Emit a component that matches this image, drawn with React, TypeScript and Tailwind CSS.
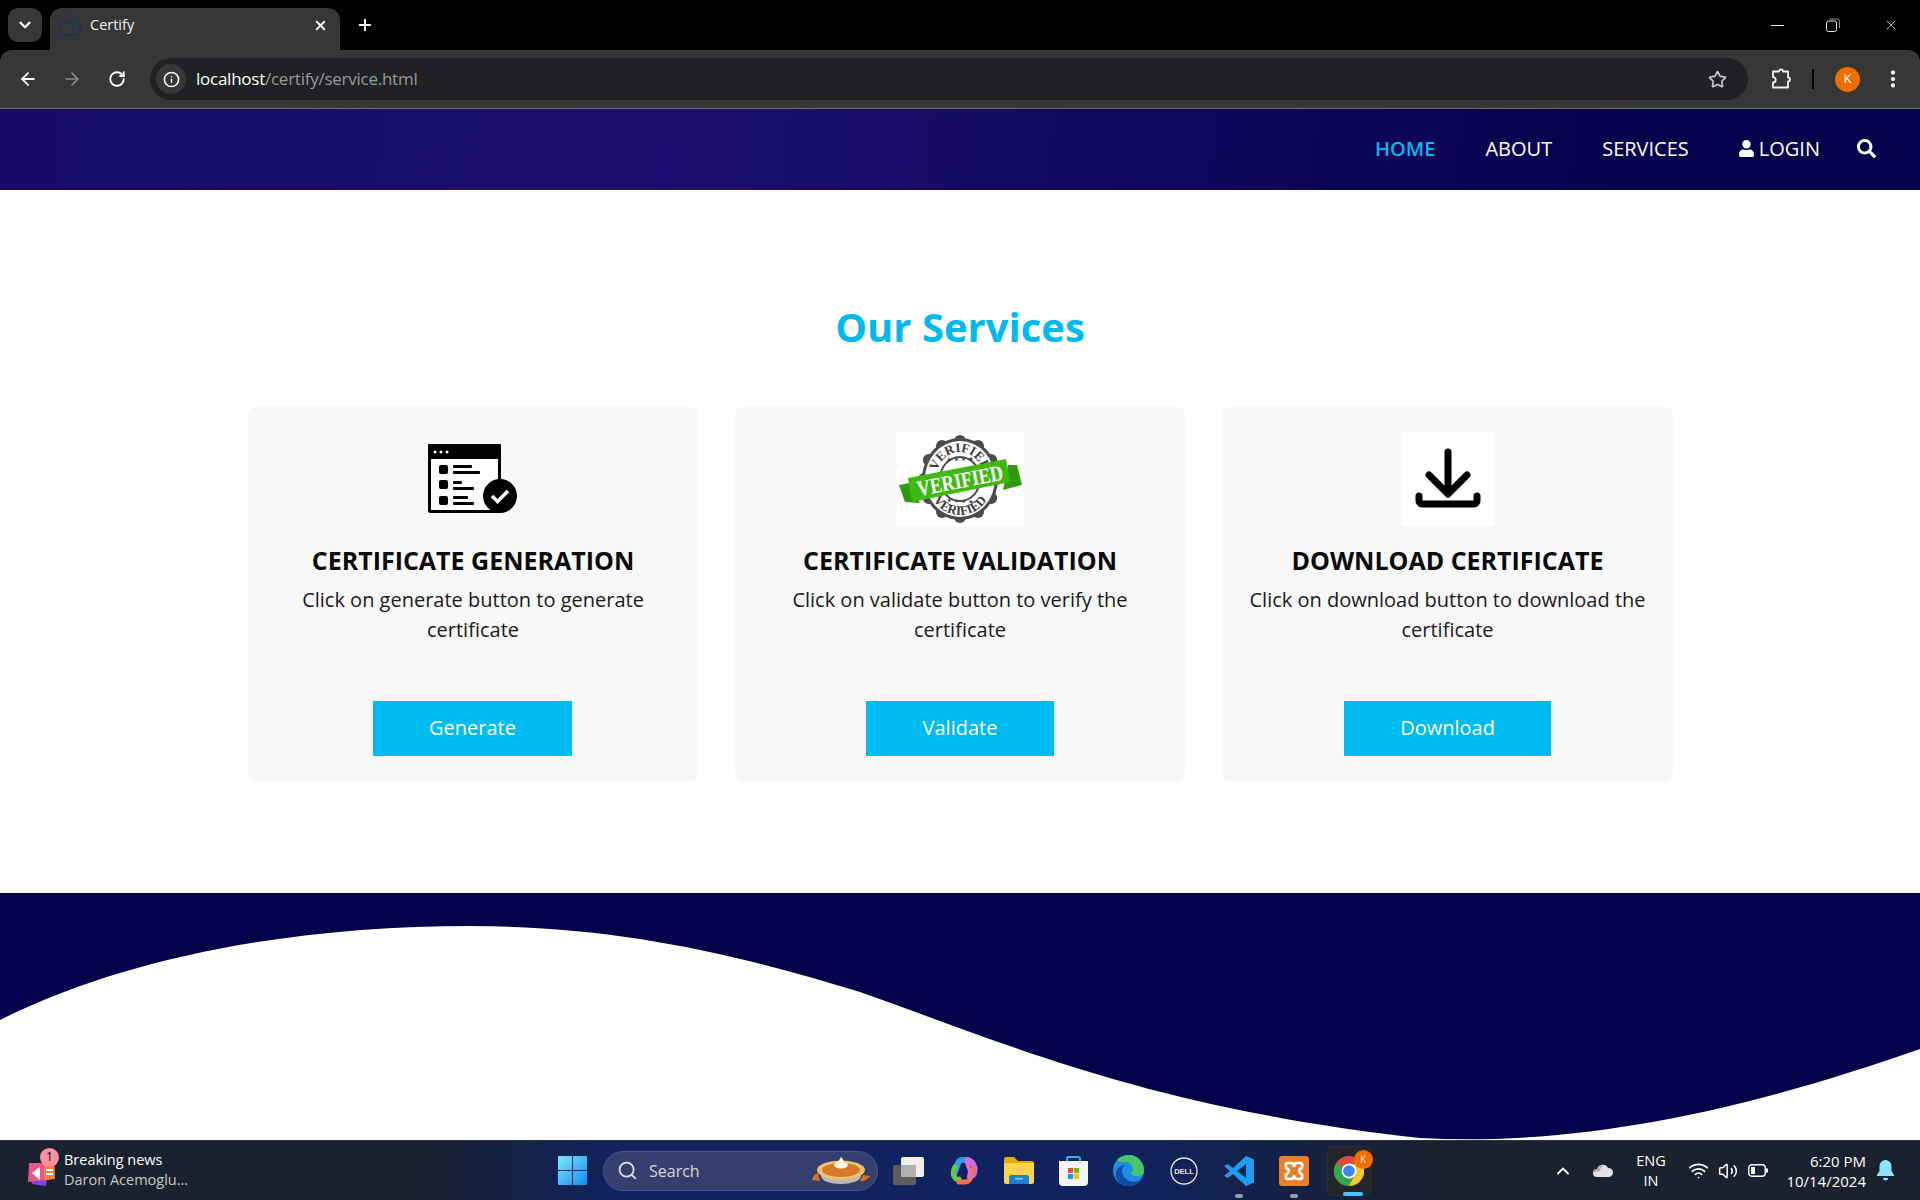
import { ArrowLeft, ArrowRight, ChevronDown, ChevronUp, Info, MoreVertical, Plus, RotateCw, Search, Star, Volume2, Wifi, X } from 'lucide-react';
import { FaSearch, FaUser } from 'react-icons/fa';

const openSans = "font-['Open_Sans',sans-serif]";

function TabFavicon() {
  return (
    <svg width="22" height="22" viewBox="0 0 22 22" fill="none" stroke="#1c3558" strokeWidth="1.3">
      <circle cx="11" cy="5" r="4.2" />
      <rect x="1" y="8" width="20" height="13" rx="1" />
      <rect x="14" y="13" width="7" height="4" />
    </svg>
  );
}

function RestoreIcon() {
  return (
    <svg width="14" height="14" viewBox="0 0 14 14" fill="none" stroke="#e8e8e8" strokeWidth="1">
      <rect x="0.5" y="3" width="10" height="10.5" rx="2" />
      <path d="M3.5 1h7.5a2.5 2.5 0 0 1 2.5 2.5V10" stroke="#999" />
    </svg>
  );
}

function ExtensionIcon() {
  return (
    <svg width="22" height="22" viewBox="0 0 22 22" fill="none" stroke="#f1f1f1" strokeWidth="1.8" strokeLinejoin="round">
      <path d="M2 3.5h6a2 2 0 0 1 4 0h5v6a2 2 0 0 1 0 4v6H2v-5a2.6 2.6 0 0 0 0-5.400z" />
    </svg>
  );
}

function BrowserChrome() {
  return (
    <div className="bg-black">
      <div className="flex h-[50px] items-start">
        <div className="ml-2 mt-2 flex h-[34px] w-[34px] items-center justify-center rounded-[10px] bg-[#373737]">
          <ChevronDown className="h-[18px] w-[18px] text-white" strokeWidth={3} />
        </div>
        <div className="ml-2 mt-2 flex h-[42px] w-[290px] items-center rounded-t-[12px] bg-[#373737] pb-[8px] pl-[9px] pr-3">
          <TabFavicon />
          <span className="ml-[9px] flex-1 font-['Open_Sans',sans-serif] text-[14.5px] text-[#f1f1f1]">Certify</span>
          <X className="h-[15px] w-[15px] text-white" strokeWidth={3} />
        </div>
        <Plus className="ml-[16px] mt-[16px] h-[18px] w-[18px] text-white" strokeWidth={2.6} />
        <div className="ml-auto flex items-center pt-[17px] text-[#e8e8e8]">
          <div className="mr-[42px] h-px w-[13px] bg-[#e8e8e8]" />
          <div className="mr-[43px]"><RestoreIcon /></div>
          <X className="mr-[21px] h-[16px] w-[16px]" strokeWidth={1.2} />
        </div>
      </div>
      <div className="flex h-[58px] items-center rounded-t-[12px] bg-[#373737] pr-[10px]">
        <ArrowLeft className="ml-[18px] h-[20px] w-[20px] text-white" strokeWidth={2.2} />
        <ArrowRight className="ml-[24px] h-[20px] w-[20px] text-[#8a8a8a]" strokeWidth={2} />
        <RotateCw className="ml-[26px] h-[18px] w-[18px] text-white" strokeWidth={2.4} />
        <div className="ml-[24px] flex h-[42px] w-[1598px] items-center rounded-full bg-[#202124] pl-[6px] pr-[21px]">
          <div className="flex h-[30px] w-[30px] items-center justify-center rounded-full bg-[#373737]">
            <Info className="h-[17px] w-[17px] text-white" strokeWidth={2.2} />
          </div>
          <div className="ml-[10px] flex-1 font-['Open_Sans',sans-serif] text-[17px] tracking-[-0.25px]">
            <span className="text-white">localhost</span>
            <span className="text-[#9a9a9a]">/certify/service.html</span>
          </div>
          <Star className="h-[19px] w-[19px] text-[#c4c4c4]" strokeWidth={2.2} />
        </div>
        <div className="ml-[23px]"><ExtensionIcon /></div>
        <div className="ml-[19px] h-[20px] w-[2px] bg-black" />
        <div className="ml-[21px] flex h-[25px] w-[25px] items-center justify-center rounded-full bg-[#f06d00] font-['Open_Sans',sans-serif] text-[13px] text-white">K</div>
        <MoreVertical className="ml-[22px] h-[22px] w-[22px] text-white" strokeWidth={2.6} />
      </div>
    </div>
  );
}

function NavBar() {
  return (
    <nav className={`flex h-[82px] items-center justify-end border-t border-[#6b6b6b] bg-[linear-gradient(95deg,#160a66_0%,#1b0e6e_35%,#0f0558_68%,#05004c_85%,#05004a_100%)] pb-[2px] pr-[36px] text-[20px] text-white ${openSans}`}>
      <a className="mr-[50px] font-semibold text-[#00b9f1]">HOME</a>
      <a className="mr-[50px]">ABOUT</a>
      <a className="mr-[50px]">SERVICES</a>
      <a className="mr-[37px] flex items-center gap-[5px]"><FaUser className="h-[17px] w-[15px]" />LOGIN</a>
      <FaSearch className="mr-[8px] h-[19px] w-[19px]" />
    </nav>
  );
}

function GenerateIcon() {
  return (
    <svg className="mt-px" width="90" height="72" viewBox="0 0 90 72">
      <rect x="1.500" y="1.500" width="70" height="66" rx="1" fill="#fff" stroke="#000" strokeWidth="3" />
      <rect x="0" y="0" width="73" height="15" rx="1" fill="#000" />
      <circle cx="7" cy="8" r="1.500" fill="#fff" /><circle cx="13" cy="8" r="1.500" fill="#fff" /><circle cx="19" cy="8" r="1.500" fill="#fff" />
      <rect x="11" y="21" width="9" height="9" rx="2" /><rect x="25" y="21" width="19" height="3" rx="1" /><rect x="25" y="27" width="27" height="3" rx="1" />
      <rect x="11" y="36" width="9" height="9" rx="2" /><rect x="25" y="37" width="9" height="3" rx="1" /><rect x="25" y="43" width="21" height="3" rx="1" />
      <rect x="11" y="52" width="9" height="9" rx="2" /><rect x="25" y="52" width="15" height="3" rx="1" /><rect x="25" y="58" width="21" height="3" rx="1" />
      <circle cx="72" cy="52" r="17" />
      <path d="M64 52l5.500 5.500L80 47" fill="none" stroke="#fff" strokeWidth="3.500" />
    </svg>
  );
}

function VerifiedIcon() {
  const scallops = Array.from({ length: 12 }, (_, i) => (i * 360) / 12);
  return (
    <div className="bg-white">
      <svg width="128" height="94" viewBox="0 0 128 94">
        <g fill="#4c4c4c">
          {scallops.map((a) => (
            <circle key={a} cx={64 + 36 * Math.cos((a * Math.PI) / 180)} cy={47 + 38 * Math.sin((a * Math.PI) / 180)} r="6" />
          ))}
          <ellipse cx="64" cy="47" rx="38" ry="41" />
        </g>
        <ellipse cx="64" cy="47" rx="35" ry="38" fill="#fff" />
        <ellipse cx="64" cy="47" rx="20" ry="22" fill="none" stroke="#4c4c4c" strokeWidth="2" />
        <defs>
          <path id="arcTop" d="M40 47a24 27 0 0 1 48 0" />
          <path id="arcBottom" d="M31 47a33 36 0 0 0 66 0" />
        </defs>
        <text fontFamily="'Liberation Serif',serif" fontSize="13" fontWeight="700" fill="#3a3a3a" textAnchor="middle">
          <textPath href="#arcTop" startOffset="50%">VERIFIED</textPath>
        </text>
        <text fontFamily="'Liberation Serif',serif" fontSize="13" fontWeight="700" fill="#3a3a3a" textAnchor="middle">
          <textPath href="#arcBottom" startOffset="50%">VERIFIED</textPath>
        </text>
        <text x="64" y="29" fontFamily="'DejaVu Sans',sans-serif" fontSize="6" fill="#444" textAnchor="middle" transform="rotate(-2 64 29)">★ ★ ★ ★</text>
        <text x="64" y="71" fontFamily="'DejaVu Sans',sans-serif" fontSize="6" fill="#444" textAnchor="middle" transform="rotate(4 64 71)">★ ★ ★ ★</text>
        <path d="M112 33h9l5 20-19 5z" fill="#2f9a10" />
        <path d="M3 53l10-2 11 20-15-1z" fill="#2f9a10" />
        <path d="M12 46L110 27l4 23-98 20z" fill="#3fb814" />
        <text x="64" y="56" fontFamily="'Liberation Serif',serif" fontSize="22" fontWeight="700" fill="#fff" textAnchor="middle" textLength="87" lengthAdjust="spacingAndGlyphs" transform="rotate(-11 64 48)">VERIFIED</text>
      </svg>
    </div>
  );
}

function DownloadIcon() {
  return (
    <div className="flex h-[94px] w-[93px] items-center justify-center bg-white">
      <svg width="66" height="62" viewBox="0 0 66 62" fill="none" stroke="#000" strokeWidth="7" strokeLinecap="round" strokeLinejoin="round">
        <path d="M33 4v41" />
        <path d="M14 27l19 19 19-19" />
        <path d="M4 48v5a3 3 0 0 0 3 3h52a3 3 0 0 0 3-3v-5" />
      </svg>
    </div>
  );
}

const services = [
  { title: 'CERTIFICATE GENERATION', text: 'Click on generate button to generate certificate', action: 'Generate', width: 'mr-px w-[199px]', icon: <GenerateIcon /> },
  { title: 'CERTIFICATE VALIDATION', text: 'Click on validate button to verify the certificate', action: 'Validate', width: 'w-[188px]', icon: <VerifiedIcon /> },
  { title: 'DOWNLOAD CERTIFICATE', text: 'Click on download button to download the certificate', action: 'Download', width: 'w-[207px]', icon: <DownloadIcon /> },
];

function Services() {
  return (
    <section className={`h-[703px] bg-white pt-[108px] ${openSans}`}>
      <h2 className="text-center text-[40px] leading-[58px] font-bold text-[#00b9f1]">Our Services</h2>
      <div className="ml-[248px] mt-[51px] grid w-[1425px] grid-cols-[450px_450px_451px] gap-[37px]">
        {services.map((s) => (
          <div key={s.title} className="flex h-[374px] flex-col items-center rounded-[8px] bg-[#f8f8f8] pt-[25px]">
            <div className="flex h-[94px] items-center justify-center">{s.icon}</div>
            <h3 className="mt-[16px] text-[25px] leading-[36px] font-bold text-[#0a0a0a]">{s.title}</h3>
            <p className="mt-[7px] w-[410px] text-center text-[20px] leading-[30px] text-[#1a1a1a]">{s.text}</p>
            <button className={`mt-[56px] h-[55px] ${s.width} bg-[#00bbf2] pb-[2px] text-[20px] text-white`}>{s.action}</button>
          </div>
        ))}
      </div>
    </section>
  );
}

function WaveFooter() {
  return (
    <footer className="h-[247px] bg-[#05004a]">
      <svg className="block" width="1920" height="247" viewBox="0 0 1920 247">
        <path
          d="M0 127C130 62 300 33 470 33C620 33 740 62 860 99C1010 152 1150 215 1420 245C1600 255 1780 205 1920 156V247H0Z"
          fill="#fff"
        />
      </svg>
    </footer>
  );
}

function NewsIcon() {
  return (
    <div className="relative h-[34px] w-[34px]">
      <svg width="30" height="28" viewBox="0 0 30 28" className="absolute left-0 top-[5px]">
        <path d="M4 12l18 2-2 13-14-2z" fill="#7a45e0" />
        <path d="M3 4h25l1 16-27 3z" fill="#e8578c" />
        <path d="M18 3.500h10l1 16-11 2z" fill="#f0803c" />
        <path d="M6 14l8-6v13z" fill="#fff" />
        <rect x="20" y="10" width="7" height="2" fill="#fff" /><rect x="20" y="14" width="7" height="2" fill="#fff" />
      </svg>
      <div className="absolute left-[14px] top-[-6px] flex h-[19px] w-[19px] items-center justify-center rounded-full bg-[#ff8f9f] text-[12px] text-black">1</div>
    </div>
  );
}

function WindowsLogo() {
  return (
    <svg width="29" height="29" viewBox="0 0 29 29">
      <defs>
        <linearGradient id="win" x1="0" y1="0" x2="1" y2="1">
          <stop offset="0" stopColor="#7de6fb" /><stop offset="1" stopColor="#0f8ef0" />
        </linearGradient>
      </defs>
      <path fill="url(#win)" d="M1 0h13v14H0V1a1 1 0 0 1 1-1zM15 0h13a1 1 0 0 1 1 1v13H15zM0 15h14v14H1a1 1 0 0 1-1-1zM15 15h14v13a1 1 0 0 1-1 1H15z" />
    </svg>
  );
}

function PieIcon() {
  return (
    <svg width="62" height="30" viewBox="0 0 62 30">
      <path d="M2 24c1-4 3-6 6-7l2 8zM60 20c-2 3-6 6-10 5l3-6z" fill="#d9701f" />
      <ellipse cx="31" cy="20" rx="20" ry="8" fill="#bfb8ae" />
      <ellipse cx="31" cy="14" rx="24" ry="9.500" fill="#f0c070" />
      <ellipse cx="31" cy="14" rx="19" ry="7" fill="#d9772a" />
      <ellipse cx="31" cy="9" rx="7" ry="3.500" fill="#fff4e0" />
      <path d="M31 1c3 3 3 5 3 8h-6c0-3 1-5 3-8z" fill="#fff4e0" />
    </svg>
  );
}

function TaskViewIcon() {
  return (
    <svg width="31" height="28" viewBox="0 0 31 28">
      <rect x="0" y="8" width="23" height="20" rx="2" fill="#5c5c5c" />
      <rect x="8" y="0" width="23" height="20" rx="2" fill="#f0f0f0" />
      <rect x="8" y="8" width="15" height="12" fill="#b0b0b0" />
    </svg>
  );
}

function CopilotIcon() {
  return (
    <svg width="28" height="28" viewBox="0 0 28 28" fill="none" strokeLinecap="round">
      <path d="M17 3h-5c-2 0-3 1-4 3L4 18" stroke="#2d9be8" strokeWidth="6" />
      <path d="M5 10c-2 3-2 7-1 9 1 3 3 4 5 3" stroke="#6cc644" strokeWidth="5" />
      <path d="M23 18c2-3 2-7 1-9-1-3-3-5-6-6" stroke="#c86ae6" strokeWidth="6" />
      <path d="M9 25h6c3 0 4-1 5-3l4-11" stroke="#f0734a" strokeWidth="5" />
      <path d="M17 6l3 8-1 6" stroke="#e86ad0" strokeWidth="4" />
    </svg>
  );
}

function FolderIcon() {
  return (
    <svg width="30" height="27" viewBox="0 0 30 27">
      <path d="M0 2a2 2 0 0 1 2-2h8l4 4h14a2 2 0 0 1 2 2v5H0z" fill="#e8a910" />
      <path d="M0 6h30v19a2 2 0 0 1-2 2H2a2 2 0 0 1-2-2z" fill="#fdd44a" />
      <path d="M5 27v-7a2 2 0 0 1 2-2h16a2 2 0 0 1 2 2v7z" fill="#1d82d4" />
      <rect x="11" y="21" width="8" height="1.500" fill="#8fd0f5" />
    </svg>
  );
}

function StoreIcon() {
  return (
    <svg width="29" height="30" viewBox="0 0 29 30">
      <path d="M8 6V3a2 2 0 0 1 2-2h9a2 2 0 0 1 2 2v3" fill="none" stroke="#2fb4ee" strokeWidth="2" />
      <path d="M0 5h29v21a4 4 0 0 1-4 4H4a4 4 0 0 1-4-4z" fill="#f5f5f5" />
      <rect x="9" y="12" width="5" height="5" fill="#f0512d" /><rect x="15" y="12" width="5" height="5" fill="#7cbb00" />
      <rect x="9" y="18" width="5" height="5" fill="#00a4ef" /><rect x="15" y="18" width="5" height="5" fill="#ffb900" />
    </svg>
  );
}

function EdgeIcon() {
  return (
    <svg width="31" height="31" viewBox="0 0 31 31">
      <circle cx="15.500" cy="15.500" r="15.500" fill="#1b8fdc" />
      <path d="M4 5c5-6 16-7 22-1 4 4 5 8 5 12 0 3-3 5-7 5-3 0-6-1-6-3 0-1 2-1 2-4 0-4-4-7-8-7-3 0-6 0-8-2z" fill="#4cc46a" />
      <path d="M12 31C6 29 2 24 3 17c1-4 5-7 9-7-3 2-4 6-2 10 2 5 8 8 15 6 2-1 3-1 2 0-3 3-9 6-15 5z" fill="#0c4fa8" />
    </svg>
  );
}

function DellIcon() {
  return (
    <svg width="28" height="28" viewBox="0 0 28 28">
      <circle cx="14" cy="14" r="13" fill="none" stroke="#e8e8e8" strokeWidth="1.300" />
      <text x="14" y="16.500" fontFamily="'Liberation Sans',sans-serif" fontSize="7.500" fontWeight="700" fill="#e8e8e8" textAnchor="middle">DELL</text>
    </svg>
  );
}

function VsCodeIcon() {
  return (
    <svg width="30" height="30" viewBox="0 0 30 30">
      <path d="M22 0l8 3.500v23L22 30 9 18l-5.500 4L0 20l6-5-6-5 3.500-2L9 12z" fill="#1f9cf0" />
      <path d="M22 8l-9 7 9 7z" fill="#10284e" />
    </svg>
  );
}

function XamppIcon() {
  return (
    <svg width="30" height="30" viewBox="0 0 30 30">
      <rect width="30" height="30" rx="3" fill="#e8812e" />
      <path d="M9 7h3c2 0 3 2 3 4 0-2 1-4 3-4h3c3 0 3 5 0 6l-1 2 1 2c3 1 3 6 0 6h-3c-2 0-3-2-3-4 0 2-1 4-3 4H9c-3 0-3-5 0-6l1-2-1-2c-3-1-3-6 0-6z" fill="none" stroke="#fff" strokeWidth="2.600" />
    </svg>
  );
}

function ChromeIcon() {
  return (
    <div className="relative flex h-[50px] w-[44px] items-center justify-center rounded-[5px] border border-[#2c2f36] bg-[#22252c] shadow-[6px_0_0_#1e2128]">
      <svg width="30" height="30" viewBox="0 0 30 30">
        <circle cx="15" cy="15" r="15" fill="#de4a3a" />
        <path d="M2 7.500A15 15 0 0 0 15 30l7-12z" fill="#2fa84f" />
        <path d="M15 8h13.500A15 15 0 0 1 15 30l6.500-12z" fill="#f7c52c" />
        <circle cx="15" cy="15" r="7.500" fill="#fff" />
        <circle cx="15" cy="15" r="5.800" fill="#3c86f0" />
      </svg>
      <div className="absolute left-[26px] top-[3px] flex h-[19px] w-[19px] items-center justify-center rounded-full bg-[#f06d00] text-[10px] text-[#ffe0c0]">K</div>
      <div className="absolute bottom-[-1px] left-[15px] h-[4px] w-[20px] rounded-full bg-[#4cc2ff]" />
    </div>
  );
}

function AppSlot({ children, running }: { children: React.ReactNode; running?: boolean }) {
  return (
    <div className="relative flex h-[60px] w-[55px] items-center justify-center">
      {children}
      {running && <div className="absolute bottom-[3px] h-[4px] w-[8px] rounded-full bg-[#9a9ea6]" />}
    </div>
  );
}

function Taskbar() {
  return (
    <div className="flex h-[60px] items-center border-t border-[#2c3444] bg-[linear-gradient(90deg,#1a212f_0%,#1a212f_22%,#11235f_32%,#11235f_50%,#10225a_60%,#1a212f_75%,#1a212f_100%)] font-['Open_Sans',sans-serif] text-white">
      <div className="ml-[26px] flex w-[532px] items-center">
        <NewsIcon />
        <div className="mb-[2px] ml-[4px] text-[14.5px] leading-[20px]">
          <div>Breaking news</div>
          <div className="text-[#c8c8c8]">Daron Acemoglu...</div>
        </div>
      </div>
      <WindowsLogo />
      <div className="ml-[16px] flex h-[40px] w-[275px] items-center rounded-full border border-[#46568a] bg-[#353f6f] pl-[13px] pr-[5px]">
        <Search className="h-[21px] w-[21px] text-[#e0e0e0]" strokeWidth={2} />
        <span className="ml-[11px] flex-1 text-[16px] text-[#d8d8d8]">Search</span>
        <PieIcon />
      </div>
      <div className="ml-[3px] flex">
        <AppSlot><TaskViewIcon /></AppSlot>
        <AppSlot><CopilotIcon /></AppSlot>
        <AppSlot><FolderIcon /></AppSlot>
        <AppSlot><StoreIcon /></AppSlot>
        <AppSlot><EdgeIcon /></AppSlot>
        <AppSlot><DellIcon /></AppSlot>
        <AppSlot running><VsCodeIcon /></AppSlot>
        <AppSlot running><XamppIcon /></AppSlot>
        <AppSlot><ChromeIcon /></AppSlot>
      </div>
      <div className="ml-[177px] flex items-center">
        <ChevronUp className="h-[20px] w-[20px] text-white" strokeWidth={2.2} />
        <svg className="ml-[20px]" width="20" height="13" viewBox="0 0 20 13">
          <path d="M4 13a4 4 0 0 1 0-8 6 6 0 0 1 11-1 4.500 4.500 0 0 1 1 9z" fill="#e0e0e0" />
          <path d="M0 9a4 4 0 0 1 4-4 6 6 0 0 1 6-3c-2 1-3 3-3 5-3 0-5 1-7 2z" fill="#a8a8a8" />
        </svg>
        <div className="ml-[15px] w-[46px] text-center text-[14.5px] leading-[20px]">ENG<br />IN</div>
        <Wifi className="ml-[14px] h-[21px] w-[21px]" strokeWidth={2} />
        <Volume2 className="ml-[9px] h-[20px] w-[20px]" strokeWidth={1.8} />
        <svg className="ml-[10px]" width="20" height="13" viewBox="0 0 20 13">
          <rect x="0.750" y="0.750" width="16.500" height="11.500" rx="3" fill="none" stroke="#fff" strokeWidth="1.400" />
          <rect x="3" y="3" width="4" height="7" fill="#fff" />
          <rect x="18" y="4.500" width="2" height="4" fill="#fff" />
        </svg>
        <div className="ml-[14px] w-[84px] text-right text-[15px] leading-[20px]">6:20 PM<br />10/14/2024</div>
        <svg className="ml-[11px]" width="17" height="21" viewBox="0 0 17 21">
          <path d="M8.500 0a6 6 0 0 1 6 6v5l2.500 4v1H0v-1l2.500-4V6a6 6 0 0 1 6-6z" fill="#8be4fb" />
          <path d="M6 18h5a2.500 2.500 0 0 1-5 0z" fill="#8be4fb" />
        </svg>
      </div>
    </div>
  );
}

export default function App() {
  return (
    <div className="h-[1200px] w-[1920px] overflow-hidden bg-white">
      <BrowserChrome />
      <NavBar />
      <Services />
      <WaveFooter />
      <Taskbar />
    </div>
  );
}
